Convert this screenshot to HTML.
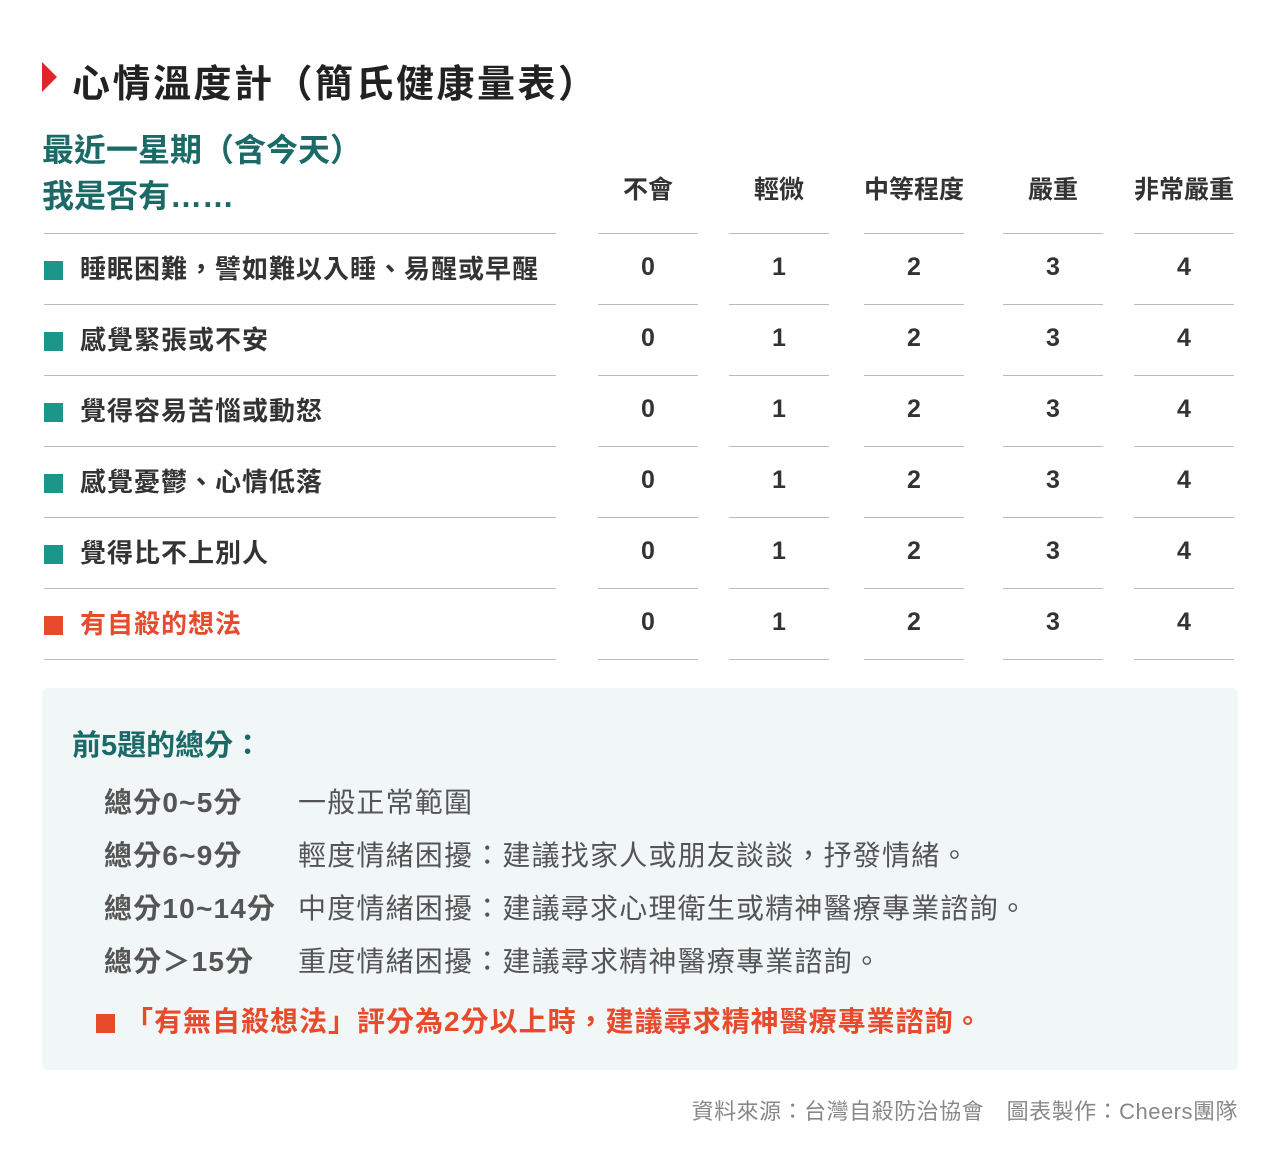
<!DOCTYPE html><html><head><meta charset="utf-8"><style>
body{margin:0;width:1280px;height:1165px;background:#fff;font-family:"Liberation Sans","Noto Sans CJK TC",sans-serif;position:relative;overflow:hidden}
.a{position:absolute;white-space:nowrap}
.ln{position:absolute;height:1px;background:#bbb}
.h{color:#1b6a67;font-weight:bold;font-size:25px}
.c{position:absolute;width:100px;text-align:center;font-size:25px;font-weight:bold;color:#333}
.r{font-size:26px;font-weight:bold;color:#333;letter-spacing:1px}
.sq{display:inline-block;width:19px;height:19px;background:#1a978a;margin-right:17px;vertical-align:-2px}
.g{font-size:28px;color:#555;letter-spacing:1.2px}
</style></head><body>
<div class="a" style="left:42px;top:62px;width:0;height:0;border-left:15px solid #e0242b;border-top:15px solid transparent;border-bottom:15px solid transparent"></div>
<div class="a" style="left:72px;top:53px;font-size:38px;font-weight:bold;color:#222;letter-spacing:2.5px">心情溫度計（簡氏健康量表）</div>
<div class="a" style="left:42px;top:127px;font-size:32px;font-weight:bold;color:#1b6a67;line-height:46px">最近一星期（含今天）<br>我是否有……</div>
<div class="c h" style="left:598px;top:170px">不會</div>
<div class="c h" style="left:729px;top:170px">輕微</div>
<div class="c h" style="left:852px;top:170px;width:124px">中等程度</div>
<div class="c h" style="left:1003px;top:170px">嚴重</div>
<div class="c h" style="left:1124px;top:170px;width:120px">非常嚴重</div>
<div id="rows"></div>
<script>
var items=["睡眠困難，譬如難以入睡、易醒或早醒","感覺緊張或不安","覺得容易苦惱或動怒","感覺憂鬱、心情低落","覺得比不上別人","有自殺的想法"];
var cols=[598,729,864,1003,1134],h="";
for(var k=0;k<7;k++){var y=233+71*k;h+='<div class="ln" style="left:44px;top:'+y+'px;width:512px"></div>';cols.forEach(function(x){h+='<div class="ln" style="left:'+x+'px;top:'+y+'px;width:100px"></div>'});}
items.forEach(function(t,i){var y=249+71*i,red=i==5;
h+='<div class="a r" style="left:44px;top:'+y+'px;'+(red?'color:#e84a2c':'')+'"><span class="sq" style="'+(red?'background:#e84a2c':'')+'"></span>'+t+'</div>';
cols.forEach(function(x,j){h+='<div class="c" style="left:'+x+'px;top:'+(y+4)+'px">'+j+'</div>'});});
document.getElementById('rows').innerHTML=h;
</script>
<div class="a" style="left:42px;top:688px;width:1196px;height:382px;background:#f1f6f6;border-radius:6px"></div>
<div class="a" style="left:72px;top:722px;font-size:29px;font-weight:bold;color:#1b6a67">前5題的總分：</div>
<div class="a g" style="left:104px;top:781px;font-weight:bold">總分0~5分</div><div class="a g" style="left:298px;top:781px">一般正常範圍</div>
<div class="a g" style="left:104px;top:834px;font-weight:bold">總分6~9分</div><div class="a g" style="left:298px;top:834px">輕度情緒困擾：建議找家人或朋友談談，抒發情緒。</div>
<div class="a g" style="left:104px;top:887px;font-weight:bold">總分10~14分</div><div class="a g" style="left:298px;top:887px">中度情緒困擾：建議尋求心理衛生或精神醫療專業諮詢。</div>
<div class="a g" style="left:104px;top:940px;font-weight:bold">總分＞15分</div><div class="a g" style="left:298px;top:940px">重度情緒困擾：建議尋求精神醫療專業諮詢。</div>
<div class="a" style="left:96px;top:1000px;font-size:28px;font-weight:bold;color:#e84a2c;letter-spacing:1px"><span class="sq" style="background:#e84a2c;margin-right:10px"></span>「有無自殺想法」評分為2分以上時，建議尋求精神醫療專業諮詢。</div>
<div class="a" style="right:42px;top:1094px;font-size:22px;color:#888;letter-spacing:0.5px">資料來源：台灣自殺防治協會　圖表製作：Cheers團隊</div>
</body></html>
